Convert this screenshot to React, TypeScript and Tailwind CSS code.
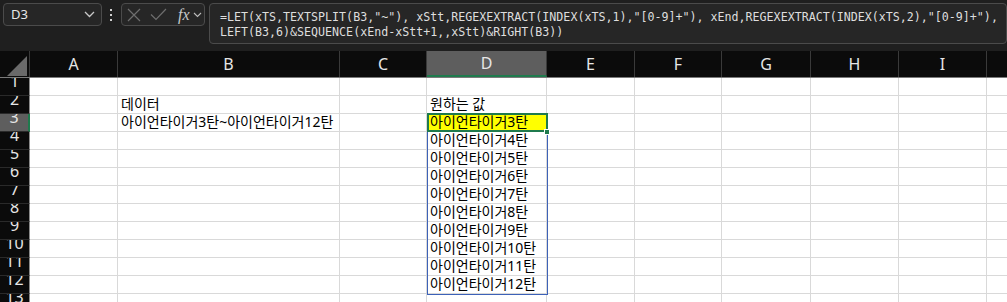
import React from "react";

const cols = [
  { k: "A", w: "w-[88px]" },
  { k: "B", w: "w-[222px]" },
  { k: "C", w: "w-[87px]" },
  { k: "D", w: "w-[120px]" },
  { k: "E", w: "w-[88px]" },
  { k: "F", w: "w-[87px]" },
  { k: "G", w: "w-[89px]" },
  { k: "H", w: "w-[88px]" },
  { k: "I", w: "w-[88px]" },
  { k: "J", w: "w-[60px]" },
];

const cellText = (r: number, c: string): string => {
  if (r === 2 && c === "B") return "데이터";
  if (r === 2 && c === "D") return "원하는 값";
  if (r === 3 && c === "B") return "아이언타이거3탄~아이언타이거12탄";
  if (c === "D" && r >= 3 && r <= 12) return `아이언타이거${r}탄`;
  return "";
};

const rows = Array.from({ length: 13 }, (_, i) => i + 1);

export default function App() {
  return (
    <div className="w-[1007px] h-[302px] overflow-hidden bg-[#1f1f1f] relative" style={{ fontFamily: '"Noto Sans", "Noto Sans CJK KR", sans-serif' }}>
      {/* formula bar */}
      <div className="h-[51px] flex items-start pt-[3px] pl-[3px]">
        <div className="w-[101px] h-[23px] rounded-[4px] border border-[#4b4b4b] bg-[#262626] flex items-center justify-between pl-[7px] pr-[6px]">
          <span className="text-[13px] text-[#e8e8e8] leading-none">D3</span>
          <svg width="11" height="7" viewBox="0 0 11 7"><path d="M1 1l4.5 4.5L10 1" stroke="#c8c8c8" strokeWidth="1.3" fill="none" /></svg>
        </div>
        <div className="w-[20px] h-[23px] flex flex-col items-center justify-center gap-[3px]">
          <div className="w-[2px] h-[2px] bg-[#cfcfcf]" />
          <div className="w-[2px] h-[2px] bg-[#cfcfcf]" />
          <div className="w-[2px] h-[2px] bg-[#cfcfcf]" />
        </div>
        <div className="w-[86px] h-[23px] rounded-[4px] border border-[#4b4b4b] bg-[#262626] flex items-center pl-[5px]">
          <svg width="14" height="14" viewBox="0 0 14 14"><path d="M1 1l12 12M13 1L1 13" stroke="#6e6e6e" strokeWidth="1.2" fill="none" /></svg>
          <svg className="ml-[9px]" width="17" height="13" viewBox="0 0 17 13"><path d="M1 6.5l5 5L16 1" stroke="#6e6e6e" strokeWidth="1.2" fill="none" /></svg>
          <span className="ml-[11px] text-[16px] italic text-[#c8c8c8] leading-none" style={{ fontFamily: '"Liberation Serif", serif' }}>fx</span>
          <svg className="ml-[3px]" width="9" height="6" viewBox="0 0 9 6"><path d="M1 1l3.5 3.5L8 1" stroke="#bdbdbd" strokeWidth="1.1" fill="none" /></svg>
        </div>
        <div className="ml-[4px] w-[820px] h-[41px] rounded-[4px] border border-[#4b4b4b] bg-[#262626] pl-[10px] pt-[6px] text-[11.65px] leading-[15px] text-[#dedede] whitespace-pre" style={{ fontFamily: '"DejaVu Sans Mono", monospace' }}>
          <div>{'=LET(xTS,TEXTSPLIT(B3,"~"), xStt,REGEXEXTRACT(INDEX(xTS,1),"[0-9]+"), xEnd,REGEXEXTRACT(INDEX(xTS,2),"[0-9]+"),'}</div>
          <div>{'LEFT(B3,6)&SEQUENCE(xEnd-xStt+1,,xStt)&RIGHT(B3))'}</div>
        </div>
      </div>

      {/* column header */}
      <div className="h-[27px] flex bg-[#0b0b0b] border-b border-[#7a7a7a]">
        <div className="w-[30px] shrink-0 flex items-end justify-end pr-[2px] pb-[1px] border-r border-[#3a3a3a]">
          <svg width="20" height="20" viewBox="0 0 20 20"><path d="M20 0L20 20L0 20Z" fill="#6a6a6a" /></svg>
        </div>
        {cols.map((c) => (
          <div
            key={c.k}
            className={`${c.w} shrink-0 flex items-center justify-center text-[16px] text-[#e6e6e6] border-r border-[#3a3a3a] ${c.k === "D" ? "bg-[#5e5e5e] border-b-2 border-b-[#1f7a4d]" : ""}`}
          >
            {c.k}
          </div>
        ))}
      </div>

      {/* body */}
      <div className="relative h-[224px] overflow-hidden bg-white">
        {rows.map((r) => (
          <div key={r} className="h-[18px] flex">
            <div
              className={`w-[30px] shrink-0 h-[18px] overflow-hidden border-b border-[#2a2a2a] ${r === 3 ? "bg-[#5e5e5e] border-r-2 border-r-[#1f7a4d]" : "bg-[#0b0b0b] border-r border-r-[#8a8a8a]"}`}
            >
              <div className="text-[16px] leading-[18px] text-center text-[#e6e6e6] -translate-y-[6px]">{r}</div>
            </div>
            {cols.map((c) => {
              const t = cellText(r, c.k);
              const yellow = r === 3 && c.k === "D";
              return (
                <div
                  key={c.k}
                  className={`${c.w} shrink-0 h-[18px] border-r border-b border-[#d9d9d9] ${yellow ? "bg-[#ffff00]" : ""} flex items-end pl-[3px] whitespace-nowrap text-[14px] leading-[18px] text-black`}
                >
                  {t}
                </div>
              );
            })}
          </div>
        ))}
        {/* spill range border */}
        <div className="absolute left-[427px] top-[36px] w-[121px] h-[181px] border border-[#3d62b8] pointer-events-none" />
        {/* active cell */}
        <div className="absolute left-[427px] top-[35px] w-[121px] h-[19px] border-2 border-[#1f7a4d] pointer-events-none" />
        <div className="absolute left-[544px] top-[51px] w-[6px] h-[6px] bg-[#1f7a4d] border border-white" />
      </div>
    </div>
  );
}
